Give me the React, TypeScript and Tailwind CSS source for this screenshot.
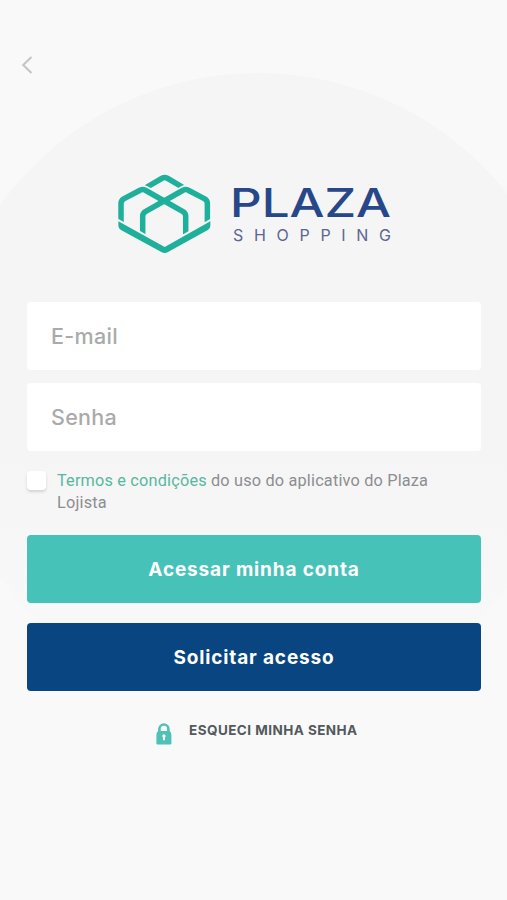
import React, { useState } from 'react';

function PlazaLogo() {
  return (
    <svg width="275" height="80" viewBox="0 0 275 80" role="img" aria-label="Plaza Shopping">
      {/* Cube mark */}
      <g transform="translate(-13.3 -9.4) scale(0.3333)" fill="none" strokeWidth="16.5">
        <path d="M124 69 L172 41 Q180 37 188 41 L236 69" stroke="#1eb09a" />
        <g stroke="#f5f5f5" strokeWidth="27">
          <path d="M65 97 L106 77 Q114 72 122 77 L180 110" />
          <path d="M180 110 L235 77 Q243 72 251 77 L290 97" />
        </g>
        <g stroke="#1eb09a">
          <path d="M49 176 V117 Q49 108 57 103 L106 77 Q114 72 122 77 L235 141 Q243 146 243 155 V210" />
          <path d="M308 176 V117 Q308 108 300 103 L251 77 Q243 72 235 77 L122 141 Q114 146 114 155 V210" />
        </g>
        <path
          d="M41 170 L180 247 L317 170 V182 Q317 192 308 197 L190 262 Q180 268 170 262 L50 197 Q41 192 41 182 Z"
          fill="#1eb09a"
          stroke="#f5f5f5"
          strokeWidth="12"
          paintOrder="stroke"
        />
      </g>
      <text x="112" y="42.5" textLength="161" lengthAdjust="spacingAndGlyphs" fill="#27478a" className="font-[Inter] text-[40px] font-medium">
        PLAZA
      </text>
      <text x="115" y="66.5" textLength="158" fill="#5c6690" className="font-[Inter] text-[16px] font-normal">
        SHOPPING
      </text>
    </svg>
  );
}

function LockIcon() {
  return (
    <svg width="16" height="22" viewBox="0 0 16 22" fill="none">
      <path d="M3.4 10 V6 a4.5 4.5 0 0 1 9 0 V10" stroke="#4fc1b6" strokeWidth="2.6" />
      <path d="M2.2 8 H13.6 Q15.4 9 15.4 12 V20.4 Q15.4 21.5 14.3 21.5 H1.5 Q0.4 21.5 0.4 20.4 V12 Q0.4 9 2.2 8 Z" fill="#4fc1b6" />
      <path d="M7.9 11.2 a1.9 1.9 0 0 1 1 3.4 V17.2 H7 V14.6 a1.9 1.9 0 0 1 0.9 -3.4 Z" fill="#fff" />
    </svg>
  );
}

export default function App() {
  const [email, setEmail] = useState('');
  const [password, setPassword] = useState('');
  const [accepted, setAccepted] = useState(false);

  const inputClass =
    'h-[68px] w-full rounded bg-white px-6 text-[21.5px] font-medium tracking-[0.3px] text-gray-600 placeholder:text-[#aaaaaa] outline-none';

  return (
    <div className="relative h-[900px] w-full overflow-hidden bg-[#f9f9f9] font-[Inter,sans-serif]">
      {/* Background circle */}
      <div className="absolute -left-[60px] top-[73px] size-[636px] rounded-full bg-linear-to-b from-[#f5f5f5] from-60% to-[#f9f9f9] to-92%" />

      <div className="relative flex flex-col pl-[27px] pr-[26px] pt-[53px]">
        <button className="-ml-[12px] size-6 text-[#c4c4c4]" aria-label="Voltar">
          <svg className="size-6" fill="none" stroke="currentColor" viewBox="0 0 24 24">
            <path strokeWidth={2} d="M16.5 4 L8.2 12 L16.5 20" />
          </svg>
        </button>

        <div className="mt-[97px] flex h-[80px] pl-[91px]">
          <PlazaLogo />
        </div>

        <form className="mt-[48px] flex flex-col" onSubmit={(e) => e.preventDefault()}>
          <input className={inputClass} placeholder="E-mail" value={email} onChange={(e) => setEmail(e.target.value)} />
          <input
            type="password"
            className={`${inputClass} mt-[13px]`}
            placeholder="Senha"
            value={password}
            onChange={(e) => setPassword(e.target.value)}
          />

          <label className="mt-[19px] flex h-[44px] gap-[11px]">
            <input
              type="checkbox"
              checked={accepted}
              onChange={() => setAccepted(!accepted)}
              className="mt-px size-[19px] shrink-0 appearance-none rounded-sm bg-white shadow-[0_2px_3px_rgba(0,0,0,0.14)] checked:bg-[#47c2b9]"
            />
            <span className="font-[Roboto] text-[16.3px] leading-[22px] tracking-[0.18px] text-[#8d8d91]">
              <a className="text-[#58b8a0]">Termos e condições</a> <span>do uso do aplicativo do Plaza</span> <span>Lojista</span>
            </span>
          </label>

          <button className="mt-[21px] h-[68px] rounded bg-[#47c2b9] pt-[2px] text-[19px] font-bold tracking-[0.85px] text-white">
            Acessar minha conta
          </button>
          <button className="mt-[20px] h-[68px] rounded bg-[#094581] pt-[2px] text-[19px] font-bold tracking-[0.85px] text-white">
            Solicitar acesso
          </button>
        </form>

        <div className="mt-[32px] flex pl-[129px]">
          <LockIcon />
          <a className="ml-[17px] text-[13.5px] font-bold leading-[15px] tracking-[0.45px] text-[#53595c]">ESQUECI MINHA SENHA</a>
        </div>
      </div>
    </div>
  );
}
